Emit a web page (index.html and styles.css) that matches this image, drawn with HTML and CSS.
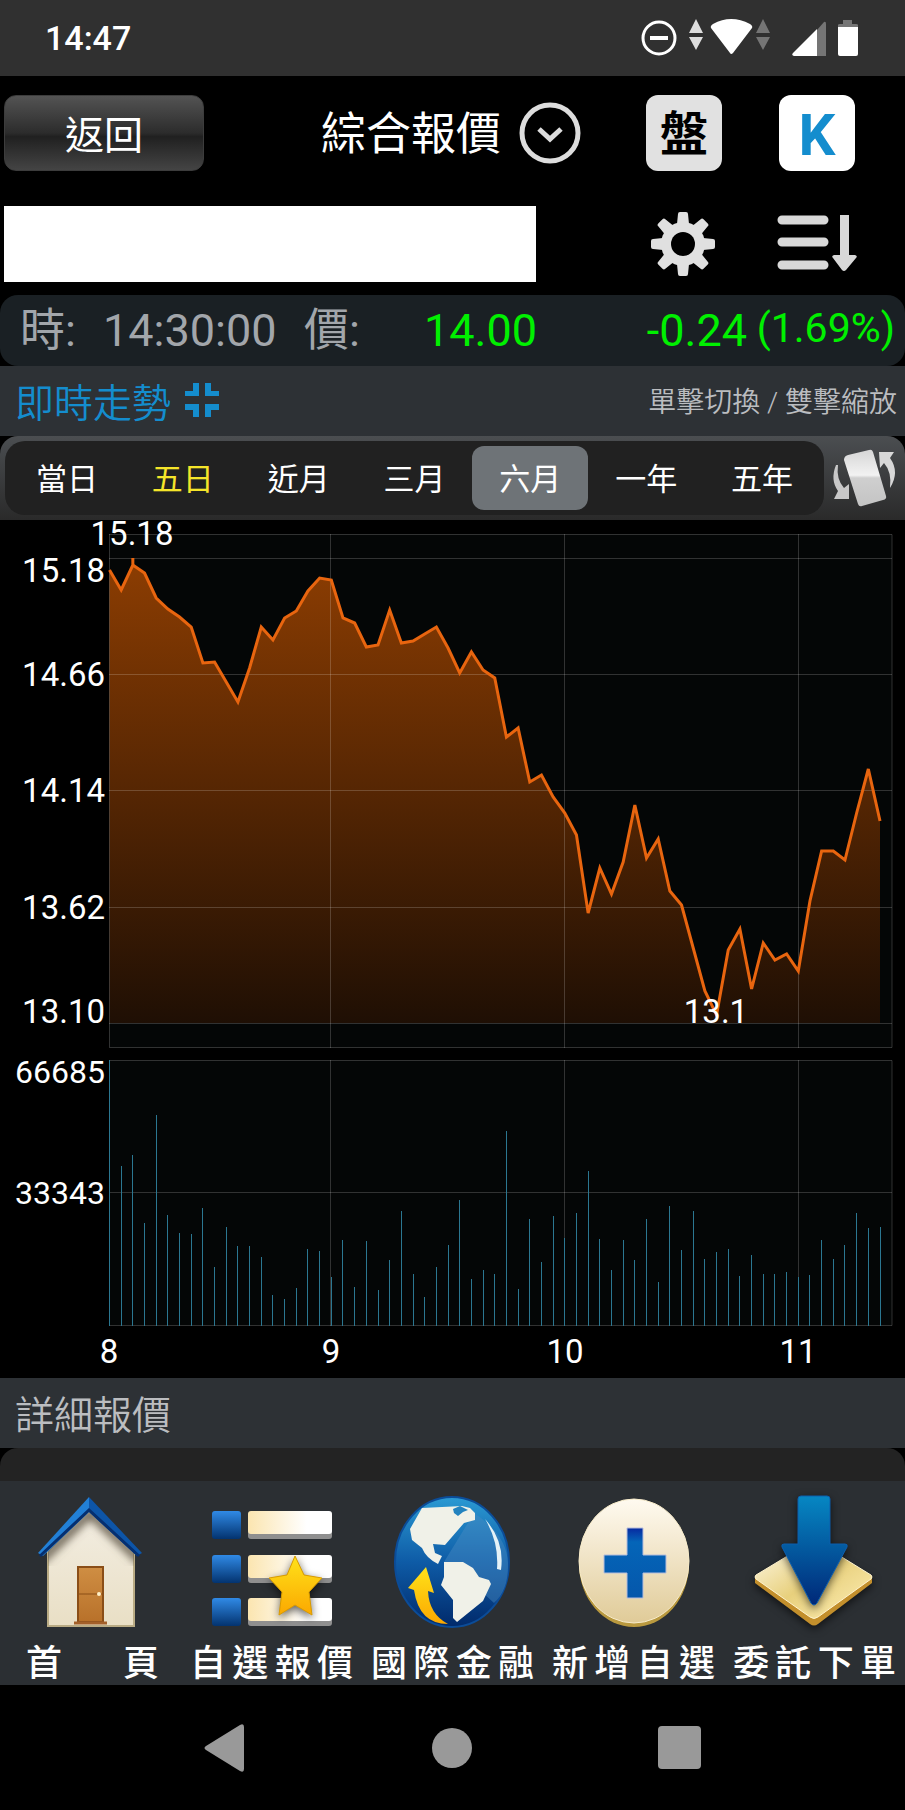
FILE: index.html
```html
<!DOCTYPE html>
<html lang="zh-Hant">
<head>
    <meta charset="UTF-8">
    <meta name="viewport" content="width=device-width, initial-scale=1">
    <title>綜合報價</title>
    <link rel="stylesheet" href="styles.css">
</head>
<body>
<div class="status-bar">
    <span class="clock">14:47</span>
    <svg class="status-icons" viewBox="0 0 220 40" aria-hidden="true">
        <circle cx="19" cy="20" r="16" fill="none" stroke="#fff" stroke-width="3"/>
        <path d="M10 20H28" stroke="#fff" stroke-width="4"/>
        <path d="M56 1L63 15H49ZM56 32L63 19H49Z" fill="#ddd"/>
        <path d="M71 10Q70 8 73 6Q91 -4 110 6Q113 8 112 10L93 35Q91 37 90 35Z" fill="#fff"/>
        <path d="M123 1L130 15H116ZM123 32L130 19H116Z" fill="#757575"/>
        <path d="M177 12L184 4Q186 3 186 6V38H177Z" fill="#757575"/>
        <path d="M177 11V38H154Q151 37 153 35Z" fill="#fff"/>
        <path d="M198 9V7Q198 6 200 6H203V2H212V6H216Q218 6 218 7V9Z" fill="#757575"/>
        <path d="M198 9H218V36Q218 38 216 38H200Q198 38 198 36Z" fill="#fff"/>
    </svg>
</div>

<header class="header">
    <div class="header-row">
        <button class="back">返回</button>
        <button class="title"><span>綜合報價</span>
            <svg viewBox="0 0 62 62" aria-hidden="true">
                <circle cx="31" cy="31" r="28" fill="none" stroke="#ddd" stroke-width="5"/>
                <path d="M20 27L31 37L42 27" fill="none" stroke="#ddd" stroke-width="5"/>
            </svg>
        </button>
        <div class="actions">
            <button class="square">盤</button>
            <button class="square current">K</button>
        </div>
    </div>
    <div class="header-row">
        <input class="search" type="text" aria-label="股票名稱">
        <div class="actions">
            <button class="icon-btn" aria-label="設定">
                <svg viewBox="0 0 76 76">
                    <g fill="#e0e0e0">
                        <circle cx="37" cy="38" r="22"/>
                        <g id="teeth">
                            <path id="tooth" d="M31 18L32 8Q32 6 34 6H40Q42 6 42 8L43 18ZM31 58L32 68Q32 70 34 70H40Q42 70 42 68L43 58Z"/>
                            <use href="#tooth" transform="rotate(45 37 38)"/>
                        </g>
                        <use href="#teeth" transform="rotate(90 37 38)"/>
                    </g>
                    <circle cx="37" cy="38" r="12" fill="#000"/>
                </svg>
            </button>
            <button class="icon-btn" aria-label="排序">
                <svg viewBox="0 0 76 76">
                    <path d="M3 14H45M3 36H45M3 59H45" stroke="#d8d8d8" stroke-width="9" stroke-linecap="round"/>
                    <path d="M61 9H70V49H76Q79 50 77 52L67 64Q65 66 63 64L54 52Q52 50 55 49H61Z" fill="#d8d8d8"/>
                </svg>
            </button>
        </div>
    </div>
</header>

<div class="quote">
    <span>時:</span>
    <span>14:30:00</span>
    <span>價:</span>
    <span class="down">14.00</span>
    <span class="down">-0.24</span>
    <span class="down percent">(1.69%)</span>
</div>

<div class="section">
    <h2 class="trend">即時走勢
        <svg viewBox="0 0 34 34" aria-hidden="true">
            <path d="M8 0H14V13H0V8H8ZM20 0H26V8H34V13H20ZM0 21H14V34H8V27H0ZM20 21H34V27H26V34H20Z" fill="#148dce"/>
        </svg>
    </h2>
    <span class="hint">單擊切換 / 雙擊縮放</span>
</div>

<div class="tabs">
    <div class="tab-list">
        <button>當日</button>
        <button class="yellow">五日</button>
        <button>近月</button>
        <button>三月</button>
        <button class="current">六月</button>
        <button>一年</button>
        <button>五年</button>
    </div>
    <button class="rotate" aria-label="旋轉">
        <svg viewBox="0 0 64 60">
            <defs>
                <linearGradient id="phone" x1="0" y1="0" x2="0" y2="1">
                    <stop offset="0" stop-color="#d6d6d6"/>
                    <stop offset=".45" stop-color="#f2f2f2"/>
                    <stop offset=".5" stop-color="#cfcfcf"/>
                    <stop offset="1" stop-color="#c4c4c4"/>
                </linearGradient>
            </defs>
            <path d="M16 7L37 2Q40 1 41 4L54 48Q55 51 51 52L30 58Q27 59 26 56L12 12Q12 8 16 7Z" fill="url(#phone)"/>
            <path d="M4 17Q-2 32 6 43L2 51L17 51V36L12 40Q4 31 6 17Z" fill="#c8c8c8"/>
            <path d="M47 4H62L58 10Q68 24 58 40Q60 24 52 15L48 20Z" fill="#d8d8d8"/>
        </svg>
    </button>
</div>

<svg class="chart" viewBox="0 0 905 858" role="img" aria-label="六月走勢圖">
    <defs>
        <linearGradient id="area" gradientUnits="userSpaceOnUse" x1="0" y1="40" x2="0" y2="503">
            <stop offset="0" stop-color="#8c3d02"/>
            <stop offset="1" stop-color="#1f0f04"/>
        </linearGradient>
    </defs>
    <path class="plot" d="M109 14H892V528H109ZM109 540H892V806H109Z"/>
    <path id="price-area" fill="url(#area)"/>
    <path class="grid" d="M109 14.5H892V527.5H109.5V14M109 38.5H892M109 154.5H892M109 270.5H892M109 387.5H892M109 503.5H892M330.5 14V528M564.5 14V528M798.5 14V528"/>
    <path class="grid" d="M109 540.5H892V805.5H109.5V540M109 672.5H892M330.5 540V806M564.5 540V806M798.5 540V806"/>
    <path id="price-line" class="line"/>
    <path id="volume" class="volume"/>
    <g text-anchor="end">
        <text x="105" y="62">15.18</text>
        <text x="105" y="166">14.66</text>
        <text x="105" y="282">14.14</text>
        <text x="105" y="399">13.62</text>
        <text x="105" y="503">13.10</text>
    </g>
    <g class="volume-labels" text-anchor="end">
        <text x="105" y="563">66685</text>
        <text x="105" y="684">33343</text>
    </g>
    <g text-anchor="middle">
        <text x="132" y="25">15.18</text>
        <text x="716" y="503">13.1</text>
        <text x="109" y="843">8</text>
        <text x="331" y="843">9</text>
        <text x="565" y="843">10</text>
        <text x="798" y="843">11</text>
    </g>
</svg>

<div class="section">
    <h2>詳細報價</h2>
</div>
<div class="panel"></div>

<nav class="toolbar">
    <a href="#home">
        <svg viewBox="1 0 140 136" aria-hidden="true">
            <defs>
                <linearGradient id="wall" x1="0" y1="0" x2="0" y2="1">
                    <stop offset="0" stop-color="#f3eee3"/>
                    <stop offset="1" stop-color="#e9dfc5"/>
                </linearGradient>
                <linearGradient id="door" x1="0" y1="0" x2="0" y2="1">
                    <stop offset="0" stop-color="#cf8e43"/>
                    <stop offset="1" stop-color="#b8712a"/>
                </linearGradient>
                <clipPath id="front">
                    <path d="M28 58L70 15L114 58V133H28Z"/>
                </clipPath>
                <filter id="soft">
                    <feGaussianBlur stdDeviation="4"/>
                </filter>
            </defs>
            <path d="M28 58L70 15L114 58V133H28Z" fill="url(#wall)" stroke="#b9ab84" stroke-width="2"/>
            <g clip-path="url(#front)">
                <path d="M20 68L70 20L121 68" fill="none" stroke="#6b6252" stroke-width="9" filter="url(#soft)"/>
            </g>
            <path d="M58 74H83V129H58Z" fill="url(#door)" stroke="#8a4e17" stroke-width="2"/>
            <path d="M58 101H83" stroke="#8a4e17"/>
            <path d="M54 130H87" stroke="#a3602a" stroke-width="3"/>
            <circle cx="79" cy="101" r="2" fill="#fff0c8"/>
            <path d="M69 4L18 60L23 63L69 19Z" fill="#2280d6"/>
            <path d="M69 4L122 60L117 63L69 19Z" fill="#0d55a8"/>
            <path d="M20 63L69 17L119 63" fill="none" stroke="#052f70" stroke-width="3"/>
        </svg>
        <span class="short">首 頁</span>
    </a>
    <a href="#favorites">
        <svg viewBox="0 0 140 136" aria-hidden="true">
            <defs>
                <linearGradient id="blue" x1="0" y1="0" x2="0" y2="1">
                    <stop offset="0" stop-color="#308ae6"/>
                    <stop offset="1" stop-color="#03336f"/>
                </linearGradient>
                <linearGradient id="cream">
                    <stop offset="0" stop-color="#fbe5b0"/>
                    <stop offset=".7" stop-color="#fff"/>
                </linearGradient>
                <linearGradient id="gold" x1="0" y1="0" x2="0" y2="1">
                    <stop offset="0" stop-color="#ffe21a"/>
                    <stop offset="1" stop-color="#fba800"/>
                </linearGradient>
            </defs>
            <g id="entry">
                <rect x="10" y="18" width="29" height="28" rx="3" fill="url(#blue)"/>
                <rect x="46" y="21" width="84" height="25" rx="3" fill="#8f8f8f"/>
                <rect x="46" y="18" width="84" height="23" rx="3" fill="url(#cream)"/>
            </g>
            <use href="#entry" y="44"/>
            <use href="#entry" y="87"/>
            <path class="shadow" d="M93 63L102 82L120 85L107 99L110 122L93 112L77 122L80 99L67 85L85 82Z" fill="url(#gold)" stroke="#d89a00"/>
        </svg>
        <span>自選報價</span>
    </a>
    <a href="#world">
        <svg viewBox="1 0 140 136" aria-hidden="true">
            <defs>
                <linearGradient id="ocean" x1="0" y1="0" x2="0" y2="1">
                    <stop offset="0" stop-color="#2b9ad3"/>
                    <stop offset=".5" stop-color="#0e5ba6"/>
                    <stop offset="1" stop-color="#012a6b"/>
                </linearGradient>
            </defs>
            <ellipse cx="70" cy="69" rx="57" ry="65" fill="url(#ocean)" stroke="#0b4c98" stroke-width="2"/>
            <path d="M62 69L92 20Q125 42 126 70Q127 96 112 110L86 86Z" fill="#4a8cc4" opacity=".45"/>
            <path d="M40 15L80 13L88 15L93 20V27L82 30L63 52L51 51L53 60L60 63L56 71Q44 65 40 55L30 47L28 36Z" fill="#f0f1e8"/>
            <path d="M71 16L78 13L86 17L81 19L76 23L72 20Z" fill="#2383bf"/>
            <path d="M62 69L81 69L91 75L97 84L107 87L109 91L101 108L75 129L71 125V107L59 92L62 84Z" fill="#f0f1e8"/>
            <path d="M103 26Q123 48 119 77L115 76Q117 49 103 26Z" fill="#e5f2f7"/>
            <path d="M44 74L52 100L46 98Q47 121 66 131Q37 131 32 97L26 95Z" fill="url(#gold)"/>
        </svg>
        <span>國際金融</span>
    </a>
    <a href="#add">
        <svg viewBox="1 0 140 136" aria-hidden="true">
            <defs>
                <linearGradient id="coin" x1="0" y1="0" x2="0" y2="1">
                    <stop offset="0" stop-color="#fffaf0"/>
                    <stop offset="1" stop-color="#e0cb98"/>
                </linearGradient>
                <linearGradient id="plus" x1="0" y1="0" x2="0" y2="1">
                    <stop offset="0" stop-color="#0729a0"/>
                    <stop offset=".2" stop-color="#0465b8"/>
                    <stop offset="1" stop-color="#0557ab"/>
                </linearGradient>
            </defs>
            <ellipse cx="71" cy="71" rx="55" ry="63" fill="#b9993f"/>
            <ellipse cx="71" cy="68" rx="55" ry="62" fill="url(#coin)" stroke="#f7ebc9"/>
            <path d="M64 35H80V62H103V80H80V105H64V80H41V62H64Z" fill="url(#plus)" stroke="#b5bddc"/>
        </svg>
        <span>新增自選</span>
    </a>
    <a href="#order">
        <svg viewBox="0 0 140 136" aria-hidden="true">
            <defs>
                <linearGradient id="arrow" x1="0" y1="0" x2="0" y2="1">
                    <stop offset="0" stop-color="#0687c3"/>
                    <stop offset="1" stop-color="#002878"/>
                </linearGradient>
                <linearGradient id="plate" x1="0" y1="0" x2="1" y2="1">
                    <stop offset="0" stop-color="#fffbed"/>
                    <stop offset=".5" stop-color="#e8d07d"/>
                    <stop offset="1" stop-color="#fff0b8"/>
                </linearGradient>
            </defs>
            <path class="shadow" d="M10 83L65 50L127 83V90L73 131Q69 134 65 131L10 90Z" fill="#c38f2c"/>
            <path d="M11 82L64 50Q69 47 74 50L126 82Q128 84 126 86L73 124Q69 127 65 124L11 86Q9 84 11 82Z" fill="url(#plate)" stroke="#fff4cf"/>
            <path class="shadow" d="M53 6Q53 3 56 3H82Q85 3 85 6V51H100Q103 51 102 54L72 110Q69 114 66 110L37 54Q36 51 39 51H53Z" fill="url(#arrow)" stroke="#0d5fae"/>
        </svg>
        <span>委託下單</span>
    </a>
</nav>

<div class="system-nav">
    <button aria-label="返回上頁">
        <svg viewBox="0 0 48 48"><path d="M44 3V45Q44 49 40 47L6 26Q3 24 6 22L40 1Q44 -1 44 3Z"/></svg>
    </button>
    <button aria-label="主畫面">
        <svg viewBox="0 0 48 48"><circle cx="24" cy="24" r="20"/></svg>
    </button>
    <button aria-label="最近使用">
        <svg viewBox="0 0 48 48"><rect x="1" y="2" width="43" height="43" rx="4"/></svg>
    </button>
</div>
<script src="chart.js"></script>
</body>
</html>
```

FILE: styles.css
```css
* {
    box-sizing: border-box;
    margin: 0;
    padding: 0;
}
body {
    background: #000;
    color: #fff;
    font-family: Roboto, "Noto Sans CJK TC", sans-serif;
}
button {
    border: 0;
    background: none;
    color: inherit;
    font-family: inherit;
    cursor: pointer;
}
svg {
    display: block;
    overflow: visible;
}

/* status bar */
.status-bar {
    display: flex;
    justify-content: space-between;
    align-items: center;
    height: 76px;
    padding: 0 45px;
    background: #303030;
}
.clock {
    font-size: 34px;
    font-weight: 500;
}
.status-icons {
    width: 220px;
}

/* header */
.header {
    display: grid;
    gap: 35px;
    padding: 19px 50px 13px 4px;
}
.header-row {
    display: flex;
    align-items: center;
    justify-content: space-between;
}
.back {
    width: 200px;
    height: 76px;
    padding-bottom: 3px;
    border: 1px solid #3c3c3c;
    border-radius: 12px;
    background: linear-gradient(#535353, #2c2c2c 50%, #202020 55%, #444);
    font-size: 39px;
}
.title {
    display: flex;
    align-items: center;
    gap: 18px;
    margin-left: auto;
    margin-right: 65px;
    font-size: 45px;
    line-height: 62px;
}
.title span {
    padding-top: 4px;
}
.title svg {
    width: 62px;
}
.actions {
    display: flex;
    gap: 57px;
}
.square {
    width: 76px;
    height: 76px;
    padding-top: 4px;
    border-radius: 12px;
    background: #e1e1e1;
    color: #000;
    font-size: 48px;
    font-weight: 700;
    line-height: 72px;
}
.square.current {
    background: #fff;
    color: #148dce;
    font-size: 58px;
}
.search {
    flex: 0 1 532px;
    min-width: 0;
    height: 76px;
    border: 0;
    padding: 0 12px;
    font-size: 36px;
}
.icon-btn {
    width: 76px;
    height: 76px;
}

/* quote */
.quote {
    display: grid;
    grid-template-columns: 83px 201px 80px 1fr 210px 148px;
    align-items: center;
    height: 71px;
    padding: 0 10px 4px 20px;
    border-radius: 18px;
    background: #1a2024;
    color: #a2a6ab;
    font-size: 45px;
    line-height: 66px;
    white-space: nowrap;
}
.down {
    color: #00f000;
    text-align: right;
}
.percent {
    padding-bottom: 6px;
    font-size: 41px;
}

.section {
    display: flex;
    align-items: center;
    justify-content: space-between;
    height: 70px;
    padding: 0 8px 3px 15px;
    background: #2d3135;
    color: #bbbdc0;
}
.section h2 {
    font-size: 39px;
    font-weight: 350;
}
.section .trend {
    display: flex;
    align-items: center;
    gap: 14px;
    color: #148dce;
}
.trend svg {
    width: 34px;
}
.hint {
    font-size: 28px;
    font-weight: 350;
}

/* period tabs */
.tabs {
    display: flex;
    align-items: center;
    gap: 8px;
    height: 84px;
    padding: 0 9px 0 5px;
    border-radius: 18px 18px 0 0;
    background: linear-gradient(#4b4e51, #2a2a2a);
}
.tab-list {
    display: flex;
    flex: 1;
    padding: 5px 4px;
    border-radius: 20px;
    background: #212121;
}
.tab-list button {
    flex: 1;
    height: 64px;
    padding-bottom: 3px;
    border-radius: 12px;
    font-size: 31px;
}
.tab-list .current {
    background: #6e7377;
}
.tab-list .yellow {
    color: #f5e52a;
}
.rotate svg {
    width: 64px;
}

/* chart */
.chart {
    width: 100%;
    height: auto;
    font-size: 33px;
    fill: #fff;
}
.chart .plot {
    fill: #040606;
}
.chart .grid {
    fill: none;
    stroke: #fff;
    stroke-opacity: .18;
}
.chart .line {
    fill: none;
    stroke: #e8650f;
    stroke-width: 3;
}
.chart .volume {
    fill: none;
    stroke: #2b7791;
    stroke-width: 1;
}
.volume-labels {
    font-size: 32px;
}
.panel {
    height: 33px;
    border-radius: 18px 18px 0 0;
    background: #232323;
}

/* toolbar */
.toolbar {
    display: grid;
    grid-template-columns: repeat(5, 1fr);
    height: 204px;
    padding-top: 12px;
    background: #2b2f33;
}
.toolbar a {
    color: #fff;
    text-decoration: none;
}
.toolbar svg {
    width: 140px;
    margin: 0 auto;
}
.toolbar span {
    display: block;
    padding: 14px 9px 0;
    font-size: 36px;
    font-weight: 500;
    line-height: 42px;
    text-align-last: justify;
    white-space: nowrap;
}
.toolbar .short {
    padding: 14px 22px 0 26px;
}
.shadow {
    filter: drop-shadow(0 3px 4px rgba(0, 0, 0, .6));
}

.system-nav {
    display: grid;
    grid-template-columns: repeat(3, 1fr);
    justify-items: center;
    align-items: center;
    height: 125px;
    padding: 0 110px;
}
.system-nav svg {
    width: 48px;
    fill: #999;
}
```

FILE: chart.js
```js
// offsets below the top of the chart, one per trading day
var prices = [
    50, 70, 45, 53, 78, 89, 97, 107, 143, 142, 162, 182, 148, 107, 120, 98, 91, 71, 58, 60, 98, 103,
    127, 125, 90, 123, 121, 114, 107, 128, 153, 132, 150, 158, 217, 208, 262, 255, 277, 293, 315,
    393, 348, 374, 342, 285, 338, 319, 371, 385, 428, 471, 495, 430, 409, 469, 423, 440, 434, 451,
    381, 331, 331, 340, 293, 249, 301
];
// bar heights
var volumes = [
    266, 160, 171, 103, 211, 111, 93, 92, 118, 59, 99, 80, 80, 69, 31, 27, 38, 77, 75, 49, 86, 39,
    85, 36, 66, 115, 52, 29, 59, 81, 126, 47, 56, 52, 195, 37, 107, 64, 110, 88, 113, 155, 87, 56,
    86, 66, 107, 44, 120, 76, 115, 67, 74, 77, 50, 71, 52, 52, 54, 49, 51, 86, 67, 81, 113, 98, 99
];
var left = 109.5;
var step = 770.5 / (prices.length - 1);
var priceBottom = 503;
var volumeBottom = 806;

var line = prices.map(function (y, i) {
    return (i ? 'L' : 'M') + (left + i * step) + ' ' + y;
}).join('');
var right = left + step * (prices.length - 1);

// short tick marks the highest price
var tick = 'M' + (left + 2 * step) + ' 38V45';
document.getElementById('price-line').setAttribute('d', line + tick);
document.getElementById('price-area').setAttribute('d', line + 'L' + right + ' ' + priceBottom + 'H' + left + 'Z');

document.getElementById('volume').setAttribute('d', volumes.map(function (h, i) {
    var x = Math.floor(left + i * step) + 0.5;
    return 'M' + x + ' ' + volumeBottom + 'v-' + h;
}).join(''));
```
